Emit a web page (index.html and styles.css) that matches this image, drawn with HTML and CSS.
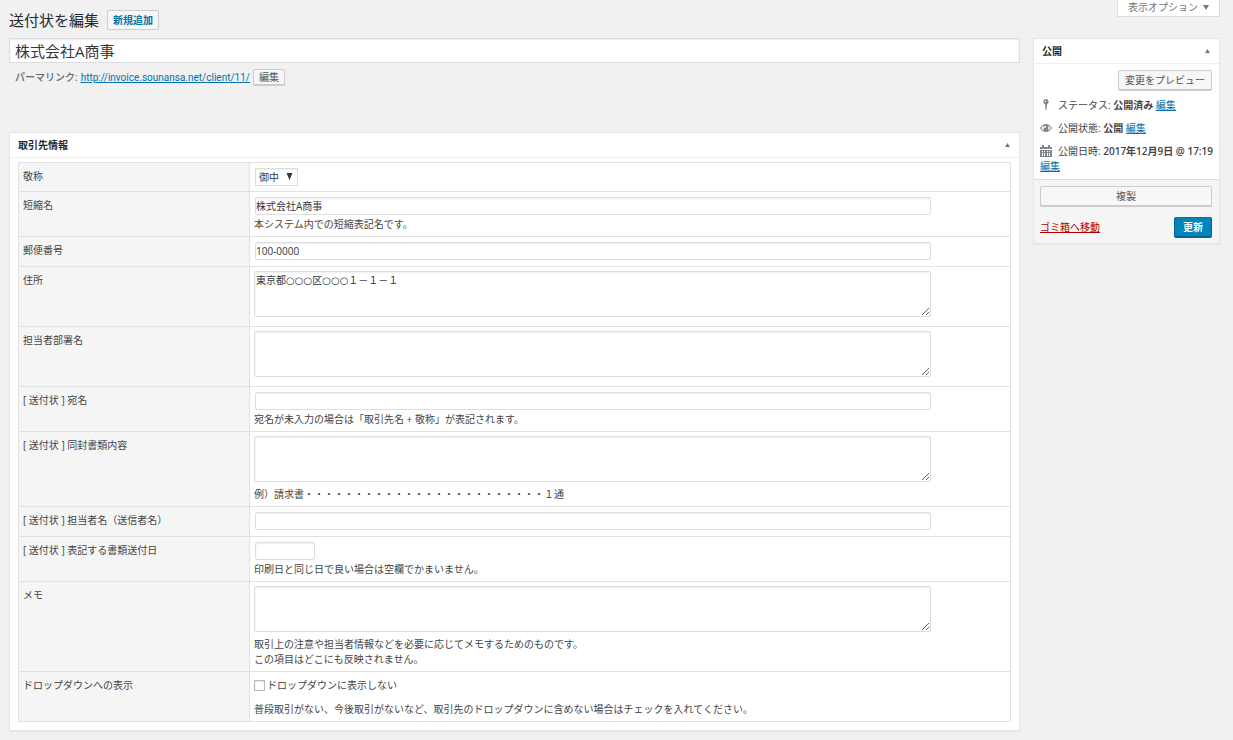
FILE: index.html
```
<!DOCTYPE html>
<html lang="ja">
<head>
<meta charset="utf-8">
<title>送付状を編集</title>
<link rel="stylesheet" href="styles.css">
</head>
<body>
<div class="page">
  <header class="top">
    <div class="heading">
      <h1>送付状を編集</h1>
      <a class="add-new" href="#">新規追加</a>
    </div>
    <button type="button" class="screen-options">表示オプション <svg class="caret" viewBox="0 0 6 6" aria-hidden="true"><path d="M0 1h6L3 6z"/></svg></button>
  </header>

  <div class="columns">
    <main class="main">
      <input class="title-input" type="text" aria-label="タイトル" value="株式会社A商事">
      <div class="permalink">
        <strong>パーマリンク:</strong>
        <a class="url" href="#">http://invoice.sounansa.net/client/11/</a>
        <button type="button" class="button button-tiny">編集</button>
      </div>

      <section class="box">
        <div class="box-head">
          <h2>取引先情報</h2>
          <button type="button" class="toggle" aria-label="パネルを閉じる"><svg viewBox="0 0 5 4" aria-hidden="true"><path d="M0 4L2.500 0 5 4z"/></svg></button>
        </div>
        <div class="box-body">
          <table class="fields">
            <tr>
              <th scope="row"><label for="keisho">敬称</label></th>
              <td><span class="select-wrap"><select id="keisho"><option>御中</option><option>様</option></select><svg class="select-arrow" viewBox="0 0 6 7" aria-hidden="true"><path d="M0 0h6L3 7z"/></svg></span></td>
            </tr>
            <tr>
              <th scope="row"><label for="short">短縮名</label></th>
              <td><input class="text" id="short" type="text" value="株式会社A商事"><p>本システム内での短縮表記名です。</p></td>
            </tr>
            <tr>
              <th scope="row"><label for="zip">郵便番号</label></th>
              <td><input class="text" id="zip" type="text" value="100-0000"></td>
            </tr>
            <tr>
              <th scope="row"><label for="address">住所</label></th>
              <td><textarea id="address">東京都○○○区○○○１－１－１</textarea></td>
            </tr>
            <tr>
              <th scope="row"><label for="dept">担当者部署名</label></th>
              <td><textarea id="dept"></textarea></td>
            </tr>
            <tr>
              <th scope="row"><label for="atena">[ 送付状 ] 宛名</label></th>
              <td><input class="text" id="atena" type="text"><p>宛名が未入力の場合は「取引先名 + 敬称」が表記されます。</p></td>
            </tr>
            <tr>
              <th scope="row"><label for="docs">[ 送付状 ] 同封書類内容</label></th>
              <td><textarea id="docs"></textarea><p>例）請求書・・・・・・・・・・・・・・・・・・・・・・・・１通</p></td>
            </tr>
            <tr>
              <th scope="row"><label for="sender">[ 送付状 ] 担当者名（送信者名）</label></th>
              <td><input class="text" id="sender" type="text"></td>
            </tr>
            <tr>
              <th scope="row"><label for="date">[ 送付状 ] 表記する書類送付日</label></th>
              <td><input class="text text-date" id="date" type="text"><p>印刷日と同じ日で良い場合は空欄でかまいません。</p></td>
            </tr>
            <tr>
              <th scope="row"><label for="memo">メモ</label></th>
              <td><textarea id="memo"></textarea><p>取引上の注意や担当者情報などを必要に応じてメモするためのものです。<br>この項目はどこにも反映されません。</p></td>
            </tr>
            <tr>
              <th scope="row">ドロップダウンへの表示</th>
              <td><label class="check"><input type="checkbox">ドロップダウンに表示しない</label><p>普段取引がない、今後取引がないなど、取引先のドロップダウンに含めない場合はチェックを入れてください。</p></td>
            </tr>
          </table>
        </div>
      </section>
    </main>

    <aside class="box side">
      <div class="box-head">
        <h2>公開</h2>
        <button type="button" class="toggle" aria-label="パネルを閉じる"><svg viewBox="0 0 5 4" aria-hidden="true"><path d="M0 4L2.500 0 5 4z"/></svg></button>
      </div>
      <div class="publish">
        <div class="preview"><button type="button" class="button">変更をプレビュー</button></div>
        <div class="status"><svg class="icon" viewBox="0 0 12 12" aria-hidden="true"><path fill-rule="evenodd" d="M6 0a2.700 2.700 0 0 1 1 5.200L6.500 11h-1L5 5.200A2.700 2.700 0 0 1 6 0zM5 1.500v1.500h1V1.500z"/></svg>ステータス: <b>公開済み</b> <a href="#">編集</a></div>
        <div class="status"><svg class="icon" viewBox="0 0 12 12" aria-hidden="true"><path fill-rule="evenodd" d="M0 6Q2.500 2 6 2T12 6Q9.500 10 6 10T0 6zM1.200 6Q2 7.800 4 8.600 2.500 6 4 3.400 2 4.200 1.200 6zM10.800 6Q10 4.200 8 3.400 9.500 6 8 8.600 10 7.800 10.800 6zM5 4a1 1 0 0 0 0 2 1 1 0 0 0 0-2z"/></svg>公開状態: <b>公開</b> <a href="#">編集</a></div>
        <div class="status"><span class="stamp"><svg class="icon" viewBox="0 0 12 12" aria-hidden="true"><path fill-rule="evenodd" d="M0 2h2V0h2v2h4V0h2v2h2v2H0zM0 5h12v7H0zM2 6v1h1V6zM2 8v3h1V8zM4 6v1h1V6zM4 8v3h1V8zM7 6v1h1V6zM7 8v3h1V8zM9 6v1h1V6zM9 8v3h1V8z"/></svg>公開日時: <b>2017年12月9日 @ 17:19</b></span> <a href="#">編集</a></div>
      </div>
      <div class="actions">
        <button type="button" class="button button-wide">複製</button>
        <div class="actions-row">
          <a class="trash" href="#">ゴミ箱へ移動</a>
          <button type="submit" class="button button-primary">更新</button>
        </div>
      </div>
    </aside>
  </div>
</div>
</body>
</html>
```
FILE: styles.css
```
* {
  box-sizing: border-box;
}

body {
  margin: 0;
  background: #f1f1f1;
  color: #444;
  font: 10px/15px "Open Sans", "Noto Sans CJK JP", sans-serif;
}

button,
input,
select,
textarea {
  margin: 0;
  color: #32373c;
  font: inherit;
}

h1,
h2,
p {
  margin: 0;
}

a {
  color: #0073aa;
}

b {
  font-weight: 600;
}

.page {
  padding: 0 13px 9px 9px;
}

.top {
  display: flex;
  justify-content: space-between;
  align-items: flex-start;
  height: 38px;
}

.heading {
  display: flex;
  align-items: center;
  gap: 8px;
  padding-top: 10px;
}

h1 {
  color: #23282d;
  font-size: 15px;
  font-weight: 400;
  line-height: 20px;
}

.add-new {
  padding: 1px 5px;
  border: 1px solid #ccc;
  border-radius: 2px;
  background: #f7f7f7;
  font-weight: 600;
  line-height: 16px;
  text-decoration: none;
}

.screen-options {
  display: flex;
  align-items: center;
  gap: 5px;
  height: 17px;
  padding: 0 10px 2px;
  border: 1px solid #ddd;
  border-top: 0;
  background: #fff;
  color: #72777c;
  line-height: 14px;
}

.caret {
  width: 6px;
  height: 6px;
  fill: #72777c;
}

.columns {
  display: grid;
  grid-template-columns: minmax(0, 1fr) 187px;
  gap: 13px;
  align-items: start;
}

.title-input {
  display: block;
  width: 100%;
  height: 25px;
  padding: 0 5px 1px;
  border: 1px solid #ddd;
  background: #fff;
  box-shadow: inset 0 1px 2px rgba(0, 0, 0, .07);
  font-size: 15px;
  line-height: 20px;
}

.permalink {
  display: flex;
  align-items: center;
  gap: 3px;
  height: 17px;
  margin: 6px 0 46px;
  padding-left: 6px;
  color: #666;
}

.permalink strong {
  font-weight: 500;
}

.url {
  font-family: Roboto, sans-serif;
}

.button {
  height: 20px;
  padding: 0 6px;
  border: 1px solid #ccc;
  border-radius: 2px;
  background: #f7f7f7;
  box-shadow: 0 1px 0 #ccc;
  color: #555;
  line-height: 16px;
}

.button-tiny {
  align-self: flex-start;
  height: 16px;
  padding: 0 5px;
  line-height: 14px;
}

.button-wide {
  width: 100%;
}

.button-primary {
  border-color: #0073aa #006799 #006799;
  background: #0085ba;
  box-shadow: 0 1px 0 #006799;
  padding: 0 8px;
  color: #fff;
  font-weight: 600;
}

.box {
  border: 1px solid #e5e5e5;
  background: #fff;
  box-shadow: 0 1px 1px rgba(0, 0, 0, .04);
}

.box-head {
  display: flex;
  justify-content: space-between;
  align-items: center;
  height: 25px;
  padding: 0 8px;
  border-bottom: 1px solid #eee;
}

h2 {
  color: #23282d;
  font-size: 10px;
  font-weight: 600;
}

.toggle {
  display: flex;
  padding: 1px;
  border: 0;
  background: none;
}

.toggle svg {
  width: 5px;
  height: 4px;
  fill: #72777c;
}

.box-body {
  padding: 4px 8px 8px;
}

.fields {
  width: 100%;
  border-collapse: collapse;
  table-layout: fixed;
}

.fields th,
.fields td {
  border: 1px solid #e1e1e1;
  padding: 4px;
  text-align: left;
  vertical-align: top;
}

.fields th {
  width: 231px;
  padding-top: 6px;
  background: #f5f5f5;
  font-weight: 400;
}

.text,
textarea {
  display: block;
  border: 1px solid #ddd;
  border-radius: 2px;
  background: #fff;
  box-shadow: inset 0 1px 2px rgba(0, 0, 0, .07);
}

.text {
  width: calc(90% - 1px);
  height: 18px;
  margin: 1px 1px 2px;
  padding: 0 0 1px;
}

.text-date {
  width: 60px;
}

textarea {
  width: 90%;
  height: 46px;
  margin-bottom: 5px;
  padding: 1px;
  resize: vertical;
  font-family: "Open Sans", "DejaVu Sans", "Noto Sans CJK JP", sans-serif;
}

.select-wrap {
  display: block;
  position: relative;
  width: 43px;
  margin: 1px;
}

select {
  display: block;
  appearance: none;
  width: 100%;
  height: 18px;
  padding: 0 3px;
  border: 1px solid #ddd;
  border-radius: 0;
  background: #fff;
  box-shadow: inset 0 1px 2px rgba(0, 0, 0, .07);
}

.select-arrow {
  position: absolute;
  top: 5px;
  right: 5px;
  width: 7px;
  height: 7px;
  fill: #32373c;
  pointer-events: none;
}

.check {
  display: flex;
  align-items: center;
  gap: 2px;
  margin: 2px 0 9px;
}

.check input {
  appearance: none;
  width: 11px;
  height: 11px;
  border: 1px solid #b4b9be;
  background: #fff;
  box-shadow: inset 0 1px 2px rgba(0, 0, 0, .1);
}

.publish {
  display: flex;
  flex-direction: column;
  gap: 8px;
  padding: 6px 7px 5px 6px;
}

.preview {
  display: flex;
  justify-content: flex-end;
}

.status {
  line-height: 15px;
}

.stamp {
  white-space: nowrap;
}

.icon {
  width: 12px;
  height: 12px;
  margin-right: 6px;
  fill: #82878c;
  vertical-align: -2px;
}

.actions {
  padding: 6px 7px 6px 6px;
  border-top: 1px solid #ddd;
  background: #f5f5f5;
}

.actions-row {
  display: flex;
  justify-content: space-between;
  align-items: center;
  padding-top: 11px;
}

.trash {
  color: #a00;
}
```
